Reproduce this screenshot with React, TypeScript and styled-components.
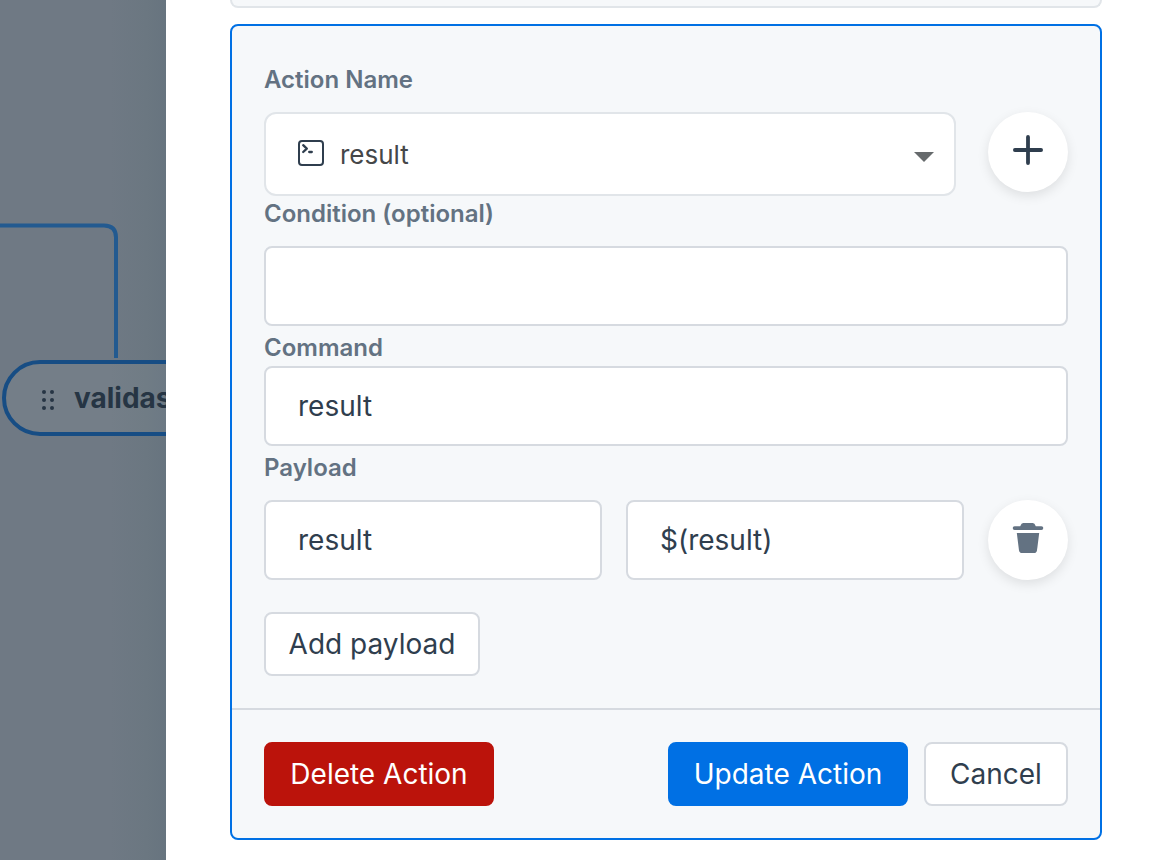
import React from "react";
import styled, { createGlobalStyle, css } from "styled-components";

const GlobalStyle = createGlobalStyle`
  *, *::before, *::after { box-sizing: border-box; }
  body {
    margin: 0;
    background: #ffffff;
    color: #2f3e4e;
    font-family: Inter, "Liberation Sans", sans-serif;
    -webkit-font-smoothing: antialiased;
  }
  button, input, select { font: inherit; color: inherit; }
`;

const Page = styled.div`
  display: grid;
  grid-template-columns: minmax(0, 1fr) minmax(0, 1000px);
  min-height: 100vh;
`;

const Canvas = styled.section`
  position: relative;
  overflow: hidden;
  background: linear-gradient(to left, #67747f, #6b7781 20px, #6f7984 56px);
`;

const Edge = styled.svg`
  position: absolute;
  top: 220px;
  left: 0;
`;

const Node = styled.div`
  position: absolute;
  top: 360px;
  left: 2px;
  display: flex;
  align-items: center;
  gap: 20px;
  width: 320px;
  height: 76px;
  padding: 0 34px;
  border: 4px solid #174d84;
  border-radius: 38px;
  background: rgba(255, 255, 255, 0.04);
  color: #263544;
  font-size: 28px;
  line-height: 36px;
  font-weight: 700;
`;

const Drawer = styled.main`
  padding: 0 64px 20px;
  background: #ffffff;
`;

const PreviousCard = styled.div`
  height: 8px;
  margin-bottom: 16px;
  border: 2px solid #e1e5e9;
  border-top: 0;
  border-radius: 0 0 8px 8px;
  background: #f6f8fa;
`;

const Card = styled.form`
  border: 2px solid #0070e4;
  border-radius: 8px;
  background: #f6f8fa;
`;

const CardBody = styled.div`
  padding: 36px 32px 32px;
`;

const CardFooter = styled.footer`
  display: flex;
  gap: 16px;
  padding: 32px;
  border-top: 2px solid #d6dae0;
`;

const Label = styled.label<{ $spaced?: boolean; $tight?: boolean }>`
  display: block;
  margin-top: ${(p) => (p.$spaced ? 4 : 0)}px;
  margin-bottom: ${(p) => (p.$tight ? 0 : 14)}px;
  color: #637282;
  font-size: 24px;
  line-height: 36px;
  font-weight: 600;
`;

const Row = styled.div<{ $gap: number }>`
  display: flex;
  align-items: flex-start;
  gap: ${(p) => p.$gap}px;
`;

const SelectWrap = styled.div`
  position: relative;
  flex: 1;
  min-width: 0;
`;

const Select = styled.select`
  display: block;
  width: 100%;
  height: 84px;
  padding: 0 72px 0 74px;
  border: 2px solid #e1e5e9;
  border-radius: 12px;
  background: #ffffff;
  color: #454749;
  font-size: 26px;
  appearance: none;
`;

const TerminalIcon = styled.svg`
  position: absolute;
  top: 27px;
  left: 33px;
  pointer-events: none;
`;

const Caret = styled.svg`
  position: absolute;
  top: 40px;
  right: 22px;
  pointer-events: none;
`;

const Input = styled.input`
  display: block;
  flex: 1;
  width: 100%;
  min-width: 0;
  height: 80px;
  padding: 0 32px;
  border: 2px solid #d6dae0;
  border-radius: 8px;
  background: #ffffff;
  font-size: 28px;
`;

const RoundButton = styled.button`
  display: flex;
  flex: none;
  align-items: center;
  justify-content: center;
  width: 80px;
  height: 80px;
  padding: 0 0 4px;
  border: 0;
  border-radius: 50%;
  background: #ffffff;
  box-shadow: 0 4px 12px rgba(0, 0, 0, 0.1);
`;

const variants = {
  plain: css`
    border-color: #d6dae0;
    background: #ffffff;
  `,
  primary: css`
    border-color: #0070e4;
    background: #0070e4;
    color: #ffffff;
  `,
  danger: css`
    margin-right: auto;
    border-color: #bb130b;
    background: #bb130b;
    color: #ffffff;
  `,
};

const Button = styled.button<{ $variant: keyof typeof variants; $width: number }>`
  min-width: ${(p) => p.$width}px;
  height: 64px;
  padding: 0 16px;
  border: 2px solid;
  border-radius: 8px;
  font-size: 28px;
  white-space: nowrap;
  ${(p) => variants[p.$variant]}
`;

const AddRow = styled.div`
  margin-top: 32px;
`;

export default function App() {
  return (
    <>
      <GlobalStyle />
      <Page>
        <Canvas>
          <Edge width="120" height="138" fill="none" stroke="#235a90" strokeWidth="4">
            <path d="M0 5.5H104Q116 5.5 116 17.5V138" />
          </Edge>
          <Node>
            <svg width="14" height="24" fill="#263544" aria-hidden="true">
              {[6, 14, 22].map((y) => (
                <React.Fragment key={y}>
                  <circle cx="4" cy={y} r="2" />
                  <circle cx="12" cy={y} r="2" />
                </React.Fragment>
              ))}
            </svg>
            validasi
          </Node>
        </Canvas>

        <Drawer>
          <PreviousCard />
          <Card onSubmit={(e) => e.preventDefault()}>
            <CardBody>
              <Label htmlFor="action-name">Action Name</Label>
              <Row $gap={32}>
                <SelectWrap>
                  <Select id="action-name" defaultValue="result">
                    <option value="result">result</option>
                  </Select>
                  <TerminalIcon
                    width="28"
                    height="28"
                    fill="none"
                    stroke="#2f3e4e"
                    strokeWidth="2"
                    strokeLinecap="round"
                    strokeLinejoin="round"
                    aria-hidden="true"
                  >
                    <rect x="2" y="2" width="24" height="24" rx="3" />
                    <path d="M6.2 6.2L9.8 9.6L6.2 13M12.2 13H14.8" strokeWidth="2.3" />
                  </TerminalIcon>
                  <Caret width="20" height="10" aria-hidden="true">
                    <path d="M0 0H20L10 10Z" fill="#666a6c" />
                  </Caret>
                </SelectWrap>
                <RoundButton type="button" aria-label="Add action">
                  <svg
                    width="32"
                    height="32"
                    stroke="#2f3e4e"
                    strokeWidth="3.8"
                    strokeLinecap="round"
                  >
                    <path d="M16 2.9V29.1M2.9 16H29.1" />
                  </svg>
                </RoundButton>
              </Row>

              <Label htmlFor="condition">Condition (optional)</Label>
              <Input id="condition" type="text" />

              <Label htmlFor="command" $spaced $tight>
                Command
              </Label>
              <Input id="command" type="text" defaultValue="result" />

              <Label htmlFor="payload-key" $spaced>
                Payload
              </Label>
              <Row $gap={24}>
                <Input id="payload-key" type="text" defaultValue="result" />
                <Input type="text" defaultValue="$(result)" aria-label="Payload value" />
                <RoundButton type="button" aria-label="Remove payload">
                  <svg width="32" height="32" fill="#637282">
                    <path d="M2.6 4.2H8.2Q9.4 1 11.2 1H20.8Q22.6 1 23.8 4.2H29.4A1.9 1.9 0 0 1 29.4 8H2.6A1.9 1.9 0 0 1 2.6 4.2Z" />
                    <path d="M4.8 11H27.2L25 28.2Q24.6 31 22 31H10Q7.4 31 7 28.2Z" />
                  </svg>
                </RoundButton>
              </Row>
              <AddRow>
                <Button type="button" $variant="plain" $width={216}>
                  Add payload
                </Button>
              </AddRow>
            </CardBody>
            <CardFooter>
              <Button type="button" $variant="danger" $width={230}>
                Delete Action
              </Button>
              <Button type="submit" $variant="primary" $width={240}>
                Update Action
              </Button>
              <Button type="button" $variant="plain" $width={144}>
                Cancel
              </Button>
            </CardFooter>
          </Card>
        </Drawer>
      </Page>
    </>
  );
}
